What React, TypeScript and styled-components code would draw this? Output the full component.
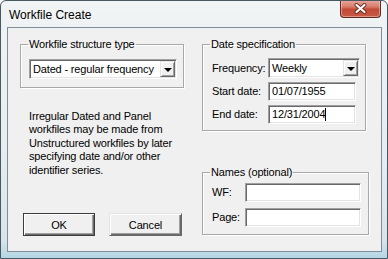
import React from "react";
import styled, { createGlobalStyle } from "styled-components";

const Global = createGlobalStyle`
  html, body { margin: 0; padding: 0; background: #ffffff; }
  body { font-family: "Liberation Sans", Arial, sans-serif; }
  * { box-sizing: border-box; }
`;

const Window = styled.div`
  width: 388px;
  height: 259px;
  display: flex;
  flex-direction: column;
  border: 1px solid #4a5863;
  border-radius: 6px 6px 0 0;
  background: linear-gradient(to bottom, #f1f4f5 0%, #e6ecef 60%, #d9e4e9 93%, #b3d6e5 100%);
  overflow: hidden;
`;

const TitleBar = styled.div`
  height: 26px;
  display: flex;
  align-items: flex-start;
  padding-left: 8px;
  flex-shrink: 0;
`;

const Title = styled.div`
  font-family: "Liberation Sans", Arial, sans-serif;
  font-size: 12px;
  line-height: 14px;
  margin-top: 7px;
  color: #000;
`;

const CloseButton = styled.div`
  margin-left: auto;
  margin-right: 6px;
  margin-top: -1px;
  width: 41px;
  height: 18px;
  border: 1px solid #5e2a22;
  border-top: none;
  border-radius: 0 0 4px 4px;
  background: linear-gradient(to bottom, #e7aa9e 0%, #d77c6b 40%, #c24a35 55%, #c85b46 100%);
  display: flex;
  align-items: center;
  justify-content: center;
  box-shadow: inset 0 0 0 1px rgba(255, 220, 210, 0.45);
`;

const Client = styled.div`
  flex: 1;
  margin: 0 5px 6px 6px;
  border: 1px solid #7f8e99;
  background: #f0f0f0;
  display: flex;
  padding: 10px 0 0 12px;
  font-family: "Liberation Sans", Arial, sans-serif;
  font-size: 11px;
  letter-spacing: -0.16px;
  color: #000;
`;

const LeftColumn = styled.div`
  width: 164px;
  display: flex;
  flex-direction: column;
  padding-bottom: 15px;
`;

const RightColumn = styled.div`
  margin-left: 18px;
  width: 167px;
  display: flex;
  flex-direction: column;
  padding-bottom: 16px;
`;

const Group = styled.fieldset<{ $w: number; $pad: string }>`
  margin: 0;
  min-width: 0;
  width: ${(p) => p.$w}px;
  padding: ${(p) => p.$pad};
  border: 1px solid #a8a8a8;
  box-shadow: inset 1px 1px 0 #ffffff, 1px 1px 0 #ffffff;
`;

const Legend = styled.legend<{ $ml: number }>`
  font-size: 11px;
  line-height: 12px;
  padding: 0 1px;
  margin-left: ${(p) => p.$ml}px;
`;

const SunkenBox = styled.div<{ $w: number; $h: number }>`
  width: ${(p) => p.$w}px;
  height: ${(p) => p.$h}px;
  background: #ffffff;
  border-top: 1px solid #a0a0a0;
  border-left: 1px solid #a0a0a0;
  border-bottom: 1px solid #ffffff;
  border-right: 1px solid #ffffff;
  box-shadow: inset 1px 1px 0 #696969, inset -1px -1px 0 #e3e3e3;
  display: flex;
  align-items: center;
  padding: 0 2px 0 3px;
  font-size: 11px;
  line-height: 13px;
  white-space: nowrap;
`;

const ComboText = styled.span`
  flex: 1;
`;

const DropButton = styled.div`
  width: 15px;
  height: 16px;
  margin-right: -1px;
  background: #f0f0f0;
  border-top: 1px solid #e3e3e3;
  border-left: 1px solid #e3e3e3;
  border-bottom: 1px solid #696969;
  border-right: 1px solid #696969;
  box-shadow: inset 1px 1px 0 #ffffff, inset -1px -1px 0 #a0a0a0;
  display: flex;
  align-items: center;
  justify-content: center;
`;

const Arrow = styled.div`
  width: 0;
  height: 0;
  border-left: 4px solid transparent;
  border-right: 4px solid transparent;
  border-top: 4px solid #000;
  margin-top: 1px;
`;

const Caret = styled.span`
  display: inline-block;
  width: 1px;
  height: 13px;
  background: #000;
  vertical-align: middle;
`;

const Rows = styled.div<{ $gap: number }>`
  display: flex;
  flex-direction: column;
  gap: ${(p) => p.$gap}px;
`;

const Row = styled.div<{ $label: number }>`
  display: grid;
  grid-template-columns: ${(p) => p.$label}px auto;
  align-items: center;
`;

const Label = styled.span`
  font-size: 11px;
  line-height: 13px;
  white-space: nowrap;
`;

const Note = styled.p`
  margin: 22px 0 0 9px;
  font-size: 11px;
  line-height: 13.4px;
  white-space: nowrap;
`;

const ButtonRow = styled.div`
  margin-top: auto;
  margin-left: 3px;
  display: flex;
  gap: 14px;
`;

const PushButton = styled.div<{ $default?: boolean }>`
  width: ${(p) => (p.$default ? 72 : 73)}px;
  height: 23px;
  background: #f0f0f0;
  display: flex;
  align-items: center;
  justify-content: center;
  font-size: 11px;
  border: 1px solid;
  border-color: ${(p) => (p.$default ? "#3c3c3c" : "#e3e3e3 #696969 #696969 #e3e3e3")};
  box-shadow: inset 1px 1px 0 #ffffff, inset -1px -1px 0 #696969, inset -2px -2px 0 #a0a0a0;
`;

const NamesGroup = styled.div`
  margin-top: auto;
`;

function Combo({ w, text }: { w: number; text: string }) {
  return (
    <SunkenBox $w={w} $h={20}>
      <ComboText>{text}</ComboText>
      <DropButton>
        <Arrow />
      </DropButton>
    </SunkenBox>
  );
}

export default function App() {
  return (
    <>
      <Global />
      <Window>
        <TitleBar>
          <Title>Workfile Create</Title>
          <CloseButton>
            <svg width="13" height="11" viewBox="0 0 13 11">
              <path d="M2.5 2 L10.5 9 M10.5 2 L2.5 9" stroke="#6b2a20" strokeWidth="4" strokeLinecap="round" />
              <path d="M2.5 2 L10.5 9 M10.5 2 L2.5 9" stroke="#ffffff" strokeWidth="2.2" strokeLinecap="round" />
            </svg>
          </CloseButton>
        </TitleBar>
        <Client>
          <LeftColumn>
            <Group $w={164} $pad="9px 6px 8px 8px">
              <Legend $ml={-1}>Workfile structure type</Legend>
              <Combo w={148} text="Dated - regular frequency" />
            </Group>
            <Note>
              Irregular Dated and Panel
              <br />
              workfiles may be made from
              <br />
              Unstructured workfiles by later
              <br />
              specifying date and/or other
              <br />
              identifier series.
            </Note>
            <ButtonRow>
              <PushButton $default>OK</PushButton>
              <PushButton>Cancel</PushButton>
            </ButtonRow>
          </LeftColumn>
          <RightColumn>
            <Group $w={164} $pad="8px 5px 6px 9px">
              <Legend $ml={-2}>Date specification</Legend>
              <Rows $gap={4}>
                <Row $label={56}>
                  <Label>Frequency:</Label>
                  <Combo w={92} text="Weekly" />
                </Row>
                <Row $label={56}>
                  <Label>Start date:</Label>
                  <SunkenBox $w={88} $h={19}>01/07/1955</SunkenBox>
                </Row>
                <Row $label={56}>
                  <Label>End date:</Label>
                  <SunkenBox $w={88} $h={19}>
                    12/31/2004
                    <Caret />
                  </SunkenBox>
                </Row>
              </Rows>
            </Group>
            <NamesGroup>
              <Group $w={167} $pad="5px 7px 7px 9px">
                <Legend $ml={-2}>Names (optional)</Legend>
                <Rows $gap={6}>
                  <Row $label={33}>
                    <Label>WF:</Label>
                    <SunkenBox $w={116} $h={19} />
                  </Row>
                  <Row $label={33}>
                    <Label>Page:</Label>
                    <SunkenBox $w={116} $h={19} />
                  </Row>
                </Rows>
              </Group>
            </NamesGroup>
          </RightColumn>
        </Client>
      </Window>
    </>
  );
}
